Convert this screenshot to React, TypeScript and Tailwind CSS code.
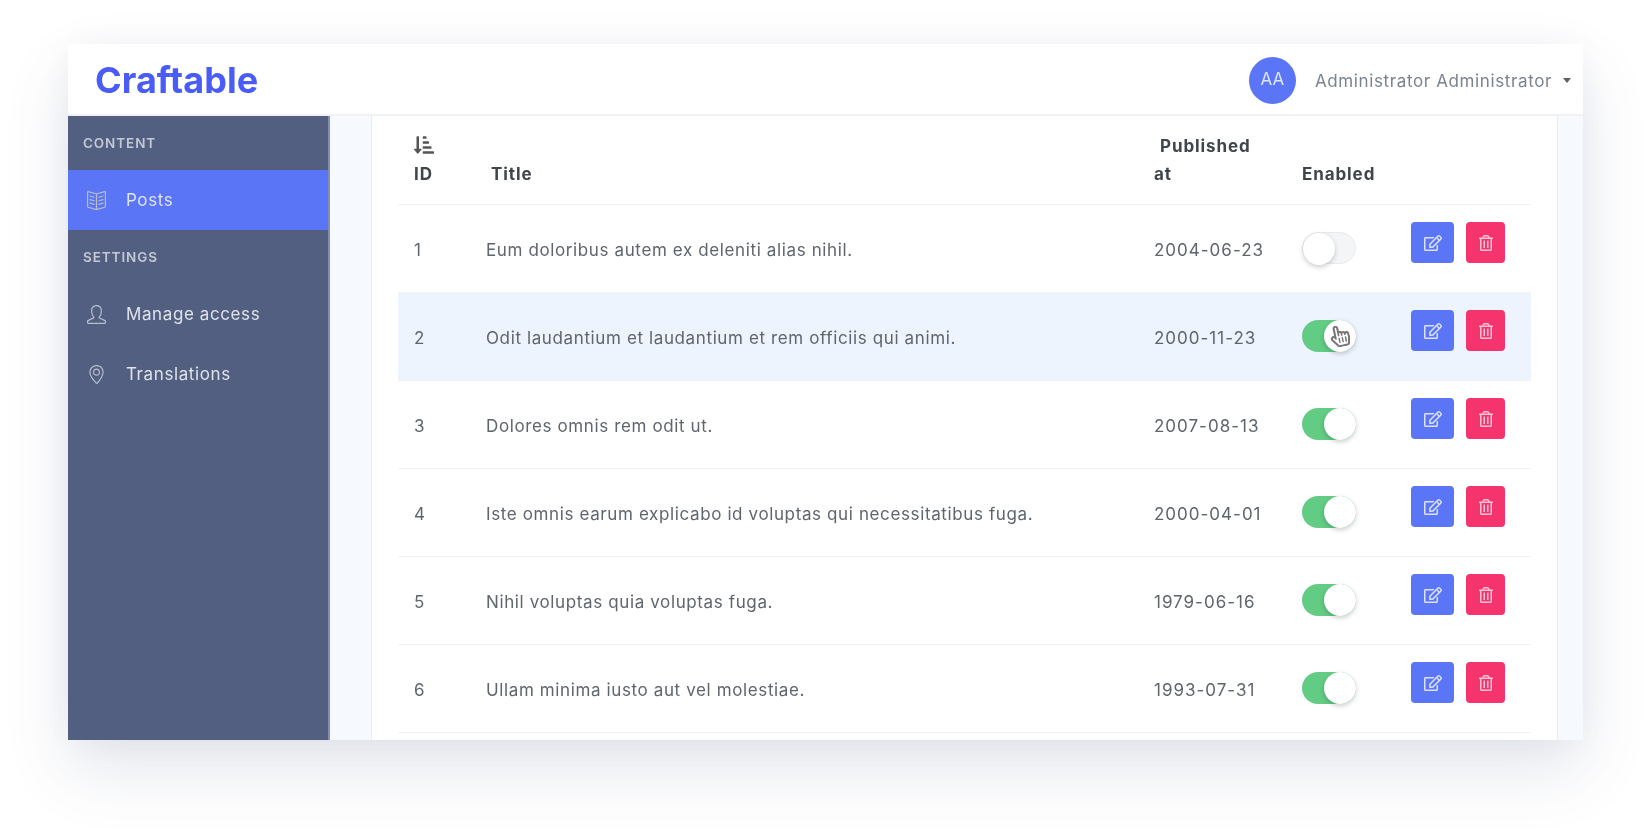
import { FaRegEdit, FaRegTrashAlt, FaSortAmountDownAlt, FaRegHandPointer } from "react-icons/fa";
import { SlBookOpen, SlUser, SlLocationPin } from "react-icons/sl";

const rows = [
  { id: 1, title: "Eum doloribus autem ex deleniti alias nihil.", date: "2004-06-23", on: false },
  { id: 2, title: "Odit laudantium et laudantium et rem officiis qui animi.", date: "2000-11-23", on: true, hover: true },
  { id: 3, title: "Dolores omnis rem odit ut.", date: "2007-08-13", on: true },
  { id: 4, title: "Iste omnis earum explicabo id voluptas qui necessitatibus fuga.", date: "2000-04-01", on: true },
  { id: 5, title: "Nihil voluptas quia voluptas fuga.", date: "1979-06-16", on: true },
  { id: 6, title: "Ullam minima iusto aut vel molestiae.", date: "1993-07-31", on: true },
];

function Toggle({ on, cursor }: { on: boolean; cursor?: boolean }) {
  return (
    <div className={`relative h-[32px] w-[54px] rounded-full ${on ? "bg-[#62cc84]" : "border border-[#e8eaee] bg-[#f4f5f7]"}`}>
      <div
        className={`absolute top-0 flex h-[32px] w-[32px] items-center justify-center rounded-full bg-white shadow-[0_2px_5px_rgba(0,0,0,0.2)] ${on ? "right-0" : "left-0"}`}
      >
        {cursor && <FaRegHandPointer className="h-[22px] w-[20px] -rotate-12 text-[#777]" />}
      </div>
    </div>
  );
}

function NavLabel({ children }: { children: string }) {
  return (
    <div className="flex h-[54px] items-center pl-[15px] text-[13.5px] font-semibold tracking-[0.9px] text-[#c3c8d4]">
      {children}
    </div>
  );
}

function NavItem({ icon, label, active }: { icon: React.ReactNode; label: string; active?: boolean }) {
  return (
    <div className={`flex h-[60px] items-center pl-[18px] text-[17px] tracking-[0.6px] text-[#dfe3ec] ${active ? "bg-[#5a75f5]" : ""}`}>
      <span className="flex w-[20px] justify-center text-[19px] text-[#b7bed0]">{icon}</span>
      <span className="ml-[20px] pt-[2px]">{label}</span>
    </div>
  );
}

export default function App() {
  return (
    <div className="h-[832px] w-[1652px] overflow-hidden bg-white pl-[68px] pt-[44px] font-['Inter','Liberation_Sans',sans-serif]">
      <div className="flex h-[696px] w-[1515px] flex-col overflow-hidden shadow-[0_30px_60px_rgba(70,85,130,0.14),0_0_40px_rgba(70,85,130,0.05)] blur-[0.5px]">
        <header className="flex h-[72px] shrink-0 items-center border-b-2 border-[#eff1f5] bg-white">
          <div className="ml-[27px] pt-[1px] text-[36px] font-bold tracking-[0.05px] text-[#4a5cf6]">
            Craftable
          </div>
          <div className="ml-auto flex items-center pt-[2px]">
            <div className="flex h-[47px] w-[47px] items-center justify-center rounded-full bg-[#5a75f5] text-[17px] text-[#dfe5fd]">
              AA
            </div>
            <span className="ml-[19px] pt-[3px] text-[17px] tracking-[0.62px] text-[#7a838e]">Administrator Administrator</span>
            <span className="ml-[11px] mr-[12px] h-0 w-0 border-x-[4.5px] border-t-[5px] border-x-transparent border-t-[#5a6168]" />
          </div>
        </header>
        <div className="flex min-h-0 flex-1">
          <aside className="w-[262px] shrink-0 border-r-2 border-[#8590ad] bg-[#535f80]">
            <NavLabel>CONTENT</NavLabel>
            <NavItem active icon={<SlBookOpen />} label="Posts" />
            <NavLabel>SETTINGS</NavLabel>
            <NavItem icon={<SlUser />} label="Manage access" />
            <NavItem icon={<SlLocationPin />} label="Translations" />
          </aside>
          <main className="min-w-0 flex-1 bg-[#f6f9fe] pl-[41px] pr-[25px]">
            <div className="h-full border-x border-[#e9edf3] bg-white pl-[26px] pr-[26px]">
              <table className="w-[1133px] table-fixed border-collapse text-[17px] tracking-[0.62px] text-[#5f656c]">
                <colgroup>
                  <col className="w-[72px]" />
                  <col className="w-[668px]" />
                  <col className="w-[148px]" />
                  <col className="w-[109px]" />
                  <col className="w-[136px]" />
                </colgroup>
                <thead>
                  <tr className="h-[88px] border-b border-[#eef0f3] text-left align-bottom text-[17px] font-semibold leading-[28px] tracking-[0.9px] text-[#3f454b]">
                    <th className="pb-[16px] pl-[16px]">
                      <FaSortAmountDownAlt className="mb-[5px] h-[20px] w-[20px] text-[#555]" />
                      ID
                    </th>
                    <th className="pb-[16px] pl-[21px]">Title</th>
                    <th className="pb-[16px] pl-[16px]">
                      <span className="block pl-[6px]">Published</span>
                      <span className="block">at</span>
                    </th>
                    <th className="pb-[16px] pl-[16px]">Enabled</th>
                    <th />
                  </tr>
                </thead>
                <tbody>
                  {rows.map((r) => (
                    <tr key={r.id} className={`h-[88px] border-b border-[#f0f1f4] ${r.hover ? "bg-[#eef4fd]" : ""}`}>
                      <td className="pl-[16px] pt-[6px]">{r.id}</td>
                      <td className="pl-[16px] pt-[6px]">{r.title}</td>
                      <td className="pl-[16px] pt-[6px] tracking-[1px]">{r.date}</td>
                      <td className="pl-[16px]">
                        <Toggle on={r.on} cursor={r.hover} />
                      </td>
                      <td className="pl-[16px]">
                        <div className="mb-[11px] flex items-center gap-[12px]">
                          <div className="flex h-[41px] w-[43px] items-center justify-center rounded-[4px] bg-[#5a75f5] text-[18px] text-[#dbe2fd]">
                            <FaRegEdit />
                          </div>
                          <div className="flex h-[41px] w-[39px] items-center justify-center rounded-[4px] bg-[#f5336c] text-[16px] text-[#fcc4d5]">
                            <FaRegTrashAlt />
                          </div>
                        </div>
                      </td>
                    </tr>
                  ))}
                </tbody>
              </table>
            </div>
          </main>
        </div>
      </div>
    </div>
  );
}
